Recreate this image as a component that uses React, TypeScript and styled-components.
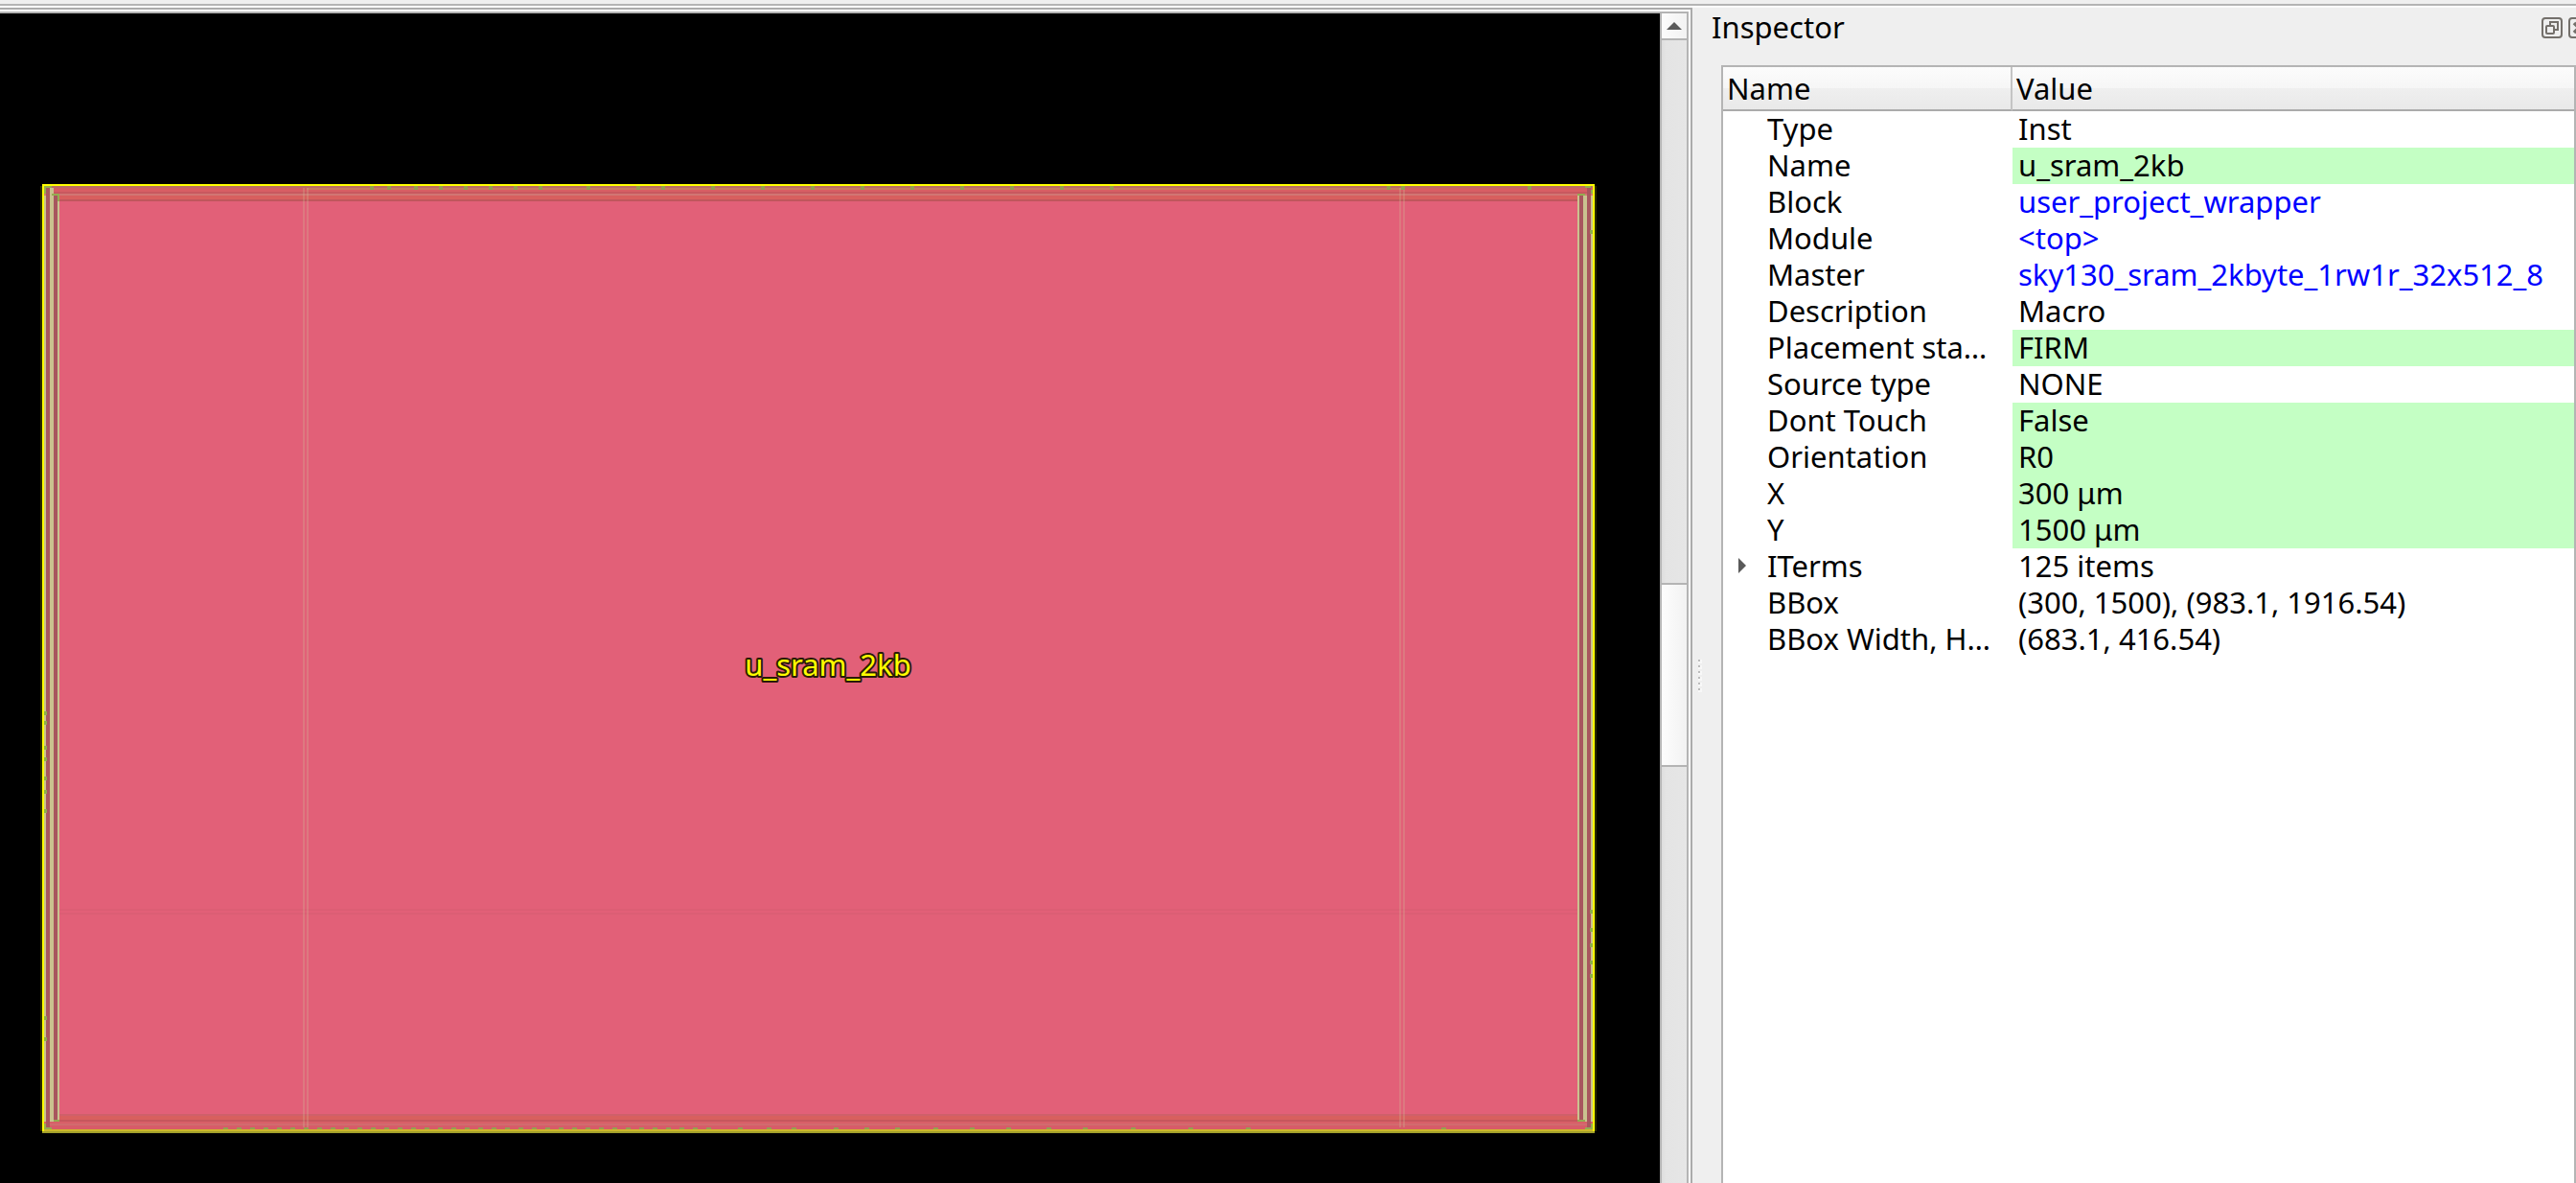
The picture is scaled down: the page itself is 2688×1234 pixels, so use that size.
import React from "react";
import styled, { createGlobalStyle } from "styled-components";

const line = "#b4b4b4";
const font = `"Noto Sans", "Open Sans", sans-serif`;

const GlobalStyle = createGlobalStyle`
  * { box-sizing: border-box; }
  body {
    margin: 0;
    background: #efefef;
    color: #000;
    font-family: ${font};
    font-size: 31px;
    line-height: 36px;
  }
`;

const Window = styled.div`
  display: flex;
  flex-direction: column;
  height: 100vh;
  overflow: hidden;
`;

const ToolbarEdge = styled.div`
  flex: none;
  height: 8px;
  border-bottom: 2px solid #fafafa;
  background: linear-gradient(#efefef 4px, ${line} 4px);
`;

const Workspace = styled.main`
  flex: 1;
  min-height: 0;
  display: grid;
  grid-template-columns: minmax(0, 1fr) 20px 902px;
`;

const ViewFrame = styled.section`
  min-height: 0;
  padding: 2px 2px 0 0;
  border: solid #ababab;
  border-width: 2px 2px 0 0;
  background: #fff;
  display: flex;
`;

const ViewArea = styled.div`
  flex: 1;
  min-width: 0;
  display: grid;
  grid-template-columns: minmax(0, 1fr) 28px;
  border: solid ${line};
  border-width: 2px 2px 0 0;
`;

const Canvas = styled.svg`
  display: block;
  width: 100%;
  height: 100%;
  min-height: 0;
  background: #000;
`;

const InstanceLabel = styled.text`
  font-family: ${font};
  font-size: 31px;
  fill: #ffff00;
  stroke: #2a1a08;
  stroke-width: 4px;
  stroke-linejoin: round;
  paint-order: stroke;
`;

const Scrollbar = styled.div`
  display: flex;
  flex-direction: column;
  min-height: 0;
  border-left: 2px solid ${line};
  background: linear-gradient(90deg, #dedede, #e4e4e4 4px, #e6e6e6);
`;

const ScrollButton = styled.button`
  flex: none;
  height: 28px;
  padding: 0;
  border: 0;
  border-bottom: 2px solid ${line};
  background: linear-gradient(90deg, #fcfcfc, #f2f2f2);
  display: flex;
  align-items: center;
  justify-content: center;
`;

const TrackSpace = styled.div<{ $grow: number }>`
  flex: ${(p) => p.$grow} 1 0;
`;

const Thumb = styled.div`
  flex: 188 1 0;
  border: solid ${line};
  border-width: 2px 0;
  background: linear-gradient(90deg, #fdfdfd, #f2f2f2);
`;

const Splitter = styled.div`
  padding: 168px 0 0 6px;
  display: flex;
  flex-direction: column;
  justify-content: center;
  gap: 2px;
`;

const Grip = styled.span`
  width: 4px;
  height: 4px;
  background: linear-gradient(#bcbcbc, #bcbcbc) 0 0 / 2px 2px no-repeat #f8f8f8;
`;

const Dock = styled.aside`
  min-width: 0;
  min-height: 0;
  display: flex;
  flex-direction: column;
`;

const DockTitleBar = styled.header`
  flex: none;
  height: 60px;
  display: flex;
  align-items: flex-start;
  justify-content: space-between;
`;

const DockTitle = styled.h1`
  margin: 0;
  padding-top: 2px;
  font-size: 31px;
  font-weight: 400;
  line-height: 36px;
`;

const DockButtons = styled.div`
  display: flex;
  gap: 6px;
  padding-top: 10px;
  margin-right: -14px;
`;

const DockButton = styled.button`
  width: 22px;
  height: 22px;
  padding: 0;
  border: 0;
  background: none;
  display: block;
  svg {
    display: block;
  }
`;

const TreeFrame = styled.div`
  flex: 1;
  min-height: 0;
  margin-left: 10px;
  border: 2px solid ${line};
  border-bottom: 0;
  background: #fff;
`;

const Tree = styled.table`
  width: 100%;
  table-layout: fixed;
  border-collapse: separate;
  border-spacing: 0;
`;

const HeadCell = styled.th<{ $name?: boolean }>`
  width: ${(p) => (p.$name ? "302px" : "auto")};
  height: 46px;
  padding: 0 4px;
  text-align: left;
  font-weight: 400;
  border-bottom: 2px solid #ababab;
  border-right: ${(p) => (p.$name ? "2px solid #c4c4c4" : "0")};
  background: linear-gradient(#fcfcfc, #f6f6f6 50%, #efefef 50%, #e9e9e9);
`;

const NameCell = styled.th`
  height: 38px;
  padding: 0 12px 2px 0;
  font-weight: 400;
  text-align: left;
`;

const NameBox = styled.div`
  display: grid;
  grid-template-columns: 46px minmax(0, 1fr);
  align-items: center;
`;

const NameText = styled.span`
  grid-column: 2;
  white-space: nowrap;
`;

const Expander = styled.button`
  grid-row: 1;
  width: 8px;
  height: 16px;
  margin-left: 16px;
  padding: 0;
  border: 0;
  background: none;
  svg {
    display: block;
  }
`;

const ValueCell = styled.td<{ $editable?: boolean }>`
  height: 38px;
  padding: 0 0 2px 6px;
  white-space: nowrap;
  background: ${(p) => (p.$editable ? "#c4ffc4" : "transparent")};
`;

const ObjectLink = styled.a`
  color: #0000ff;
  text-decoration: none;
`;

type Property = {
  name: string;
  value: string;
  editable?: boolean;
  link?: boolean;
  children?: boolean;
};

const properties: Property[] = [
  { name: "Type", value: "Inst" },
  { name: "Name", value: "u_sram_2kb", editable: true },
  { name: "Block", value: "user_project_wrapper", link: true },
  { name: "Module", value: "<top>", link: true },
  { name: "Master", value: "sky130_sram_2kbyte_1rw1r_32x512_8", link: true },
  { name: "Description", value: "Macro" },
  { name: "Placement sta…", value: "FIRM", editable: true },
  { name: "Source type", value: "NONE" },
  { name: "Dont Touch", value: "False", editable: true },
  { name: "Orientation", value: "R0", editable: true },
  { name: "X", value: "300 μm", editable: true },
  { name: "Y", value: "1500 μm", editable: true },
  { name: "ITerms", value: "125 items", children: true },
  { name: "BBox", value: "(300, 1500), (983.1, 1916.54)" },
  { name: "BBox Width, H…", value: "(683.1, 416.54)" },
];

/* Horizontal metal bands along the macro's edges: [y, height, colour]. */
const bands: [number, number, string][] = [
  [194, 2, "#b86c66"],
  [196, 2, "#d2605f"],
  [198, 2, "#d85e64"],
  [200, 2, "#c8585f"],
  [202, 2, "#d17673"],
  [204, 4, "#d85f5e"],
  [208, 2, "#c0565c"],
  [1162, 2, "#cf606a"],
  [1164, 4, "#d8605e"],
  [1168, 2, "#c6575d"],
  [1170, 2, "#d85f68"],
  [1172, 2, "#d26a6e"],
  [1174, 4, "#d75c68"],
];

/* Power-ring stripes at both sides: [x, width, top, bottom, colour]. */
const stripes: [number, number, number, number, string][] = [
  [46, 2, 204, 1170, "#cac28f"],
  [48, 4, 196, 1176, "#a8565e"],
  [52, 4, 196, 1170, "#cac28f"],
  [56, 4, 204, 1168, "#a8565e"],
  [60, 2, 204, 1168, "#cac28f"],
  [1646, 2, 204, 1168, "#cac28f"],
  [1648, 4, 204, 1168, "#a8565e"],
  [1652, 4, 204, 1170, "#cac28f"],
  [1656, 4, 196, 1176, "#a8565e"],
  [1660, 2, 204, 1170, "#cac28f"],
];

/* Ring corners: [x, y, width, height]. */
const corners: [number, number, number, number][] = [
  [46, 194, 8, 2],
  [46, 196, 2, 6],
  [54, 202, 8, 2],
  [60, 204, 2, 6],
  [46, 1172, 2, 6],
  [46, 1176, 8, 2],
  [56, 1168, 6, 2],
  [1654, 194, 6, 2],
  [1660, 198, 2, 4],
  [1646, 202, 8, 2],
  [1646, 1168, 8, 2],
  [1654, 1176, 8, 2],
  [1660, 1172, 2, 4],
];

const leftPins = [742, 752, 778, 790, 810, 824, 844, 1060, 1082];
const rightPins = [240, 949, 968, 984, 1002, 1016];
const topPins = [386, 404, 432, 458, 484, 510, 536, 562, 612, 664, 690, 742, 794, 846, 898, 950, 1002, 1054, 1106, 1158, 1447, 1462, 1594];
const bottomPins = [
  ...Array.from({ length: 37 }, (_, i) => 233 + i * 14),
  770, 800, 826, 870, 902, 934, 974, 1012, 1050, 1092, 1130, 1180, 1240, 1300, 1504,
];

function MacroDrawing() {
  return (
    <Canvas viewBox="0 14 1732 1220" role="img" aria-label="Layout view" shapeRendering="crispEdges">
      <rect x="42" y="194" width="1624" height="986" fill="#2c2c00" />
      <rect x="46" y="194" width="1616" height="984" fill="#e26078" />
      <rect x="46" y="948" width="1616" height="2" fill="#dc5e74" />
      <rect x="46" y="952" width="1616" height="2" fill="#dc5e74" />
      {bands.map(([y, h, c]) => (
        <rect key={y} x="46" y={y} width="1616" height={h} fill={c} />
      ))}
      <rect x="320" y="196" width="1142" height="2" fill="#c87c5e" />
      {[316, 320, 1460, 1464].map((x) => (
        <rect key={x} x={x} y="196" width="2" height="980" fill="#d0c098" opacity="0.26" />
      ))}
      {stripes.map(([x, w, top, bottom, c]) => (
        <rect key={x} x={x} y={top} width={w} height={bottom - top} fill={c} />
      ))}
      {corners.map(([x, y, w, h]) => (
        <rect key={`${x}-${y}`} x={x} y={y} width={w} height={h} fill="#94ac50" />
      ))}
      {topPins.map((x) => (
        <rect key={x} x={x} y="194" width="4" height="4" fill="#94a052" />
      ))}
      {bottomPins.map((x) => (
        <rect key={x} x={x} y="1176" width="5" height="2" fill="#94a052" />
      ))}
      {leftPins.map((y) => (
        <rect key={y} x="46" y={y} width="3" height="4" fill="#8eac50" />
      ))}
      {rightPins.map((y) => (
        <rect key={y} x="1659" y={y} width="3" height="4" fill="#8eac50" />
      ))}
      <rect x="44" y="192" width="1620" height="2" fill="#ffff00" />
      <rect x="44" y="192" width="2" height="988" fill="#ffff00" />
      <rect x="1662" y="192" width="2" height="988" fill="#ffff00" />
      <rect x="46" y="1178" width="1616" height="2" fill="#ccb82c" />
      <rect x="44" y="1180" width="1620" height="2" fill="#a3a02b" />
      <InstanceLabel x="864" y="705" textAnchor="middle">
        u_sram_2kb
      </InstanceLabel>
    </Canvas>
  );
}

export default function App() {
  return (
    <Window>
      <GlobalStyle />
      <ToolbarEdge />
      <Workspace>
        <ViewFrame>
          <ViewArea>
            <MacroDrawing />
            <Scrollbar>
              <ScrollButton aria-label="Scroll up">
                <svg width="16" height="8" viewBox="0 0 16 8">
                  <path d="M8 0 16 8H0Z" fill="#5a5a5a" />
                </svg>
              </ScrollButton>
              <TrackSpace $grow={566} />
              <Thumb />
              <TrackSpace $grow={434} />
            </Scrollbar>
          </ViewArea>
        </ViewFrame>
        <Splitter>
          {Array.from({ length: 6 }, (_, i) => (
            <Grip key={i} />
          ))}
        </Splitter>
        <Dock>
          <DockTitleBar>
            <DockTitle>Inspector</DockTitle>
            <DockButtons>
              <DockButton aria-label="Float panel">
                <svg width="22" height="22" viewBox="0 0 11 11" fill="none" stroke="#74706b">
                  <rect x="0.5" y="0.5" width="10" height="10" rx="1.5" />
                  <rect x="2.5" y="4.5" width="4" height="4" rx="0.5" />
                  <path d="M4.5 4V2.5H8.5V6.5H7" />
                </svg>
              </DockButton>
              <DockButton aria-label="Close panel">
                <svg width="22" height="22" viewBox="0 0 11 11" fill="none" stroke="#74706b">
                  <rect x="0.5" y="0.5" width="10" height="10" rx="1.5" />
                  <path d="M3 3 8 8M8 3 3 8" strokeWidth="1.8" />
                </svg>
              </DockButton>
            </DockButtons>
          </DockTitleBar>
          <TreeFrame>
            <Tree>
              <thead>
                <tr>
                  <HeadCell $name scope="col">
                    Name
                  </HeadCell>
                  <HeadCell scope="col">Value</HeadCell>
                </tr>
              </thead>
              <tbody>
                {properties.map((p) => (
                  <tr key={p.name}>
                    <NameCell scope="row">
                      <NameBox>
                        {p.children && (
                          <Expander aria-label={`Expand ${p.name}`}>
                            <svg width="8" height="16" viewBox="0 0 8 16">
                              <path d="M0 0 8 8 0 16Z" fill="#5a5a5a" />
                            </svg>
                          </Expander>
                        )}
                        <NameText>{p.name}</NameText>
                      </NameBox>
                    </NameCell>
                    <ValueCell $editable={p.editable}>
                      {p.link ? <ObjectLink href="#">{p.value}</ObjectLink> : p.value}
                    </ValueCell>
                  </tr>
                ))}
              </tbody>
            </Tree>
          </TreeFrame>
        </Dock>
      </Workspace>
    </Window>
  );
}
